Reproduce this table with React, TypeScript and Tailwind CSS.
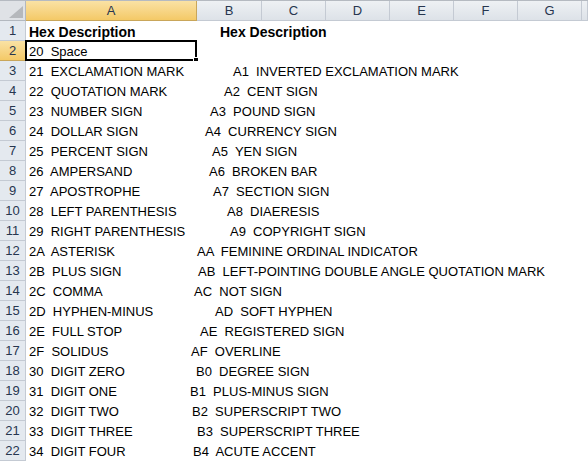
import React from "react";

const rows: [string, string, number][] = [
  ["21  EXCLAMATION MARK", "A1  INVERTED EXCLAMATION MARK", 233],
  ["22  QUOTATION MARK", "A2  CENT SIGN", 224],
  ["23  NUMBER SIGN", "A3  POUND SIGN", 210],
  ["24  DOLLAR SIGN", "A4  CURRENCY SIGN", 205],
  ["25  PERCENT SIGN", "A5  YEN SIGN", 212],
  ["26  AMPERSAND", "A6  BROKEN BAR", 209],
  ["27  APOSTROPHE", "A7  SECTION SIGN", 213],
  ["28  LEFT PARENTHESIS", "A8  DIAERESIS", 227],
  ["29  RIGHT PARENTHESIS", "A9  COPYRIGHT SIGN", 230],
  ["2A  ASTERISK", "AA  FEMININE ORDINAL INDICATOR", 197],
  ["2B  PLUS SIGN", "AB  LEFT-POINTING DOUBLE ANGLE QUOTATION MARK", 198],
  ["2C  COMMA", "AC  NOT SIGN", 194],
  ["2D  HYPHEN-MINUS", "AD  SOFT HYPHEN", 215],
  ["2E  FULL STOP", "AE  REGISTERED SIGN", 200],
  ["2F  SOLIDUS", "AF  OVERLINE", 191],
  ["30  DIGIT ZERO", "B0  DEGREE SIGN", 196],
  ["31  DIGIT ONE", "B1  PLUS-MINUS SIGN", 190],
  ["32  DIGIT TWO", "B2  SUPERSCRIPT TWO", 192],
  ["33  DIGIT THREE", "B3  SUPERSCRIPT THREE", 197],
  ["34  DIGIT FOUR", "B4  ACUTE ACCENT", 193],
];

const cols: { l: string; w: string; sel?: boolean }[] = [
  { l: "A", w: "w-[171px]", sel: true },
  { l: "B", w: "w-[65px]" },
  { l: "C", w: "w-[64px]" },
  { l: "D", w: "w-[64px]" },
  { l: "E", w: "w-[64px]" },
  { l: "F", w: "w-[64px]" },
  { l: "G", w: "w-[64px]" },
  { l: "", w: "flex-1" },
];

function RowHead({ n, sel }: { n: number; sel?: boolean }) {
  return (
    <div
      className={
        "w-[26px] shrink-0 h-[20px] border-r border-b flex items-center justify-center pt-[1px] text-[13px] text-[#27364f] " +
        (sel
          ? "bg-gradient-to-b from-[#fae2a4] to-[#f4c966] border-[#c9a65a]"
          : "bg-[#e4e9ef] border-[#c4cad3]")
      }
    >
      {n}
    </div>
  );
}

function Row({ n, sel, children }: { n: number; sel?: boolean; children: React.ReactNode }) {
  return (
    <div className="flex h-[20px]">
      <RowHead n={n} sel={sel} />
      <div className="relative flex-1 grid items-center pt-[1px] bg-white whitespace-pre text-black">{children}</div>
    </div>
  );
}

export default function App() {
  return (
    <div
      className="w-[588px] h-[461px] overflow-hidden bg-white select-none"
      style={{ fontFamily: '"Liberation Sans", Arial, sans-serif' }}
    >
      {/* column header */}
      <div className="flex h-[21px] border-t border-[#b5bac1]">
        <div className="w-[26px] shrink-0 border-r border-b border-[#b3b8bf] bg-[#dfe2e6] relative flex items-end justify-end p-[2px]">
          <svg width="14" height="12" viewBox="0 0 14 12">
            <polygon points="14,0 14,12 0,12" fill="#b5b8bc" />
          </svg>
        </div>
        {cols.map((c, i) => (
          <div
            key={i}
            className={
              c.w +
              " shrink-0 border-r border-b flex items-center justify-center text-[13px] text-[#27364f] " +
              (c.sel
                ? "bg-gradient-to-b from-[#fae2a4] to-[#f4c966] border-[#c9a65a]"
                : "bg-gradient-to-b from-[#eef1f4] to-[#dde2e8] border-[#c4cad3]")
            }
          >
            {c.l}
          </div>
        ))}
      </div>

      <Row n={1}>
        <span className="col-start-1 row-start-1 pl-[3px] font-bold text-[14px]">Hex Description</span>
        <span className="col-start-1 row-start-1 pl-[194px] font-bold text-[14px]">Hex Description</span>
      </Row>
      <Row n={2} sel>
        <span className="col-start-1 row-start-1 pl-[3px] text-[13px]">20  Space</span>
        <div className="absolute left-[-1px] top-[-1px] w-[172px] h-[21px] border-[2px] border-black pointer-events-none">
          <div className="absolute right-[-4px] bottom-[-4px] w-[6px] h-[6px] bg-black border border-white" />
        </div>
      </Row>
      {rows.map(([a, b, x], i) => (
        <Row key={i} n={i + 3}>
          <span className="col-start-1 row-start-1 pl-[3px] text-[13px]">{a}</span>
          <span className="col-start-1 row-start-1 text-[13px]" style={{ paddingLeft: x - 26 }}>
            {b}
          </span>
        </Row>
      ))}
    </div>
  );
}
